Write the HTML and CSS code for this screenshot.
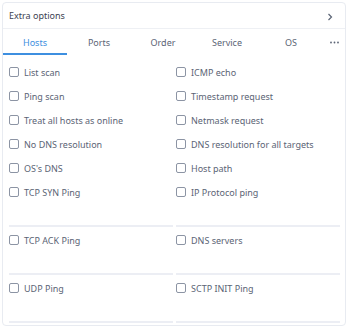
FILE: index.html
```html
<!DOCTYPE html>
<html lang="en">
<head>
    <meta charset="UTF-8">
    <title>Extra options</title>
    <link rel="stylesheet" href="styles.css">
</head>
<body>
    <div class="card">
        <div class="card-header">
            <span class="card-title">Extra options</span>
            <svg class="chevron" width="6" height="8" viewBox="0 0 6 8"><path d="M1.5 1 L4.5 4 L1.5 7" fill="none" stroke="#5b6475" stroke-width="1.2"/></svg>
        </div>
        <div class="tabs">
            <div class="tab active">Hosts</div>
            <div class="tab">Ports</div>
            <div class="tab">Order</div>
            <div class="tab">Service</div>
            <div class="tab">OS</div>
            <div class="tab more">
                <svg width="9" height="3" viewBox="0 0 9 3"><circle cx="1" cy="1.5" r="0.9" fill="#5b6475"/><circle cx="4.5" cy="1.5" r="0.9" fill="#5b6475"/><circle cx="8" cy="1.5" r="0.9" fill="#5b6475"/></svg>
            </div>
        </div>
        <div class="options">
            <label class="option"><span class="box"></span>List scan</label>
            <label class="option"><span class="box"></span>ICMP echo</label>
            <label class="option"><span class="box"></span>Ping scan</label>
            <label class="option"><span class="box"></span>Timestamp request</label>
            <label class="option"><span class="box"></span>Treat all hosts as online</label>
            <label class="option"><span class="box"></span>Netmask request</label>
            <label class="option"><span class="box"></span>No DNS resolution</label>
            <label class="option"><span class="box"></span>DNS resolution for all targets</label>
            <label class="option"><span class="box"></span>OS's DNS</label>
            <label class="option"><span class="box"></span>Host path</label>

            <div class="field-option">
                <label class="option"><span class="box"></span>TCP SYN Ping</label>
                <div class="field"></div>
            </div>
            <div class="field-option">
                <label class="option"><span class="box"></span>IP Protocol ping</label>
                <div class="field"></div>
            </div>
            <div class="field-option">
                <label class="option"><span class="box"></span>TCP ACK Ping</label>
                <div class="field"></div>
            </div>
            <div class="field-option">
                <label class="option"><span class="box"></span>DNS servers</label>
                <div class="field"></div>
            </div>
            <div class="field-option">
                <label class="option"><span class="box"></span>UDP Ping</label>
                <div class="field"></div>
            </div>
            <div class="field-option">
                <label class="option"><span class="box"></span>SCTP INIT Ping</label>
                <div class="field"></div>
            </div>
        </div>
    </div>
</body>
</html>
```

FILE: styles.css
```css
body {
    margin: 0;
    padding: 2px;
    background-color: white;
    font-family: "Noto Sans", sans-serif;
    font-size: 9px;
    color: #5b6475;
}
.card {
    width: 344px;
    height: 324px;
    border: 1px solid #e8ebf1;
    border-radius: 4px;
    box-sizing: border-box;
    overflow: hidden;
}
.card-header {
    height: 25px;
    display: flex;
    align-items: center;
    justify-content: space-between;
    padding: 0 12px 0 6px;
    border-bottom: 1px solid #eef0f4;
}
.card-title {
    color: #3c4252;
}
.chevron {
    margin-top: 2px;
}
.tabs {
    display: flex;
    height: 26px;
}
.tab {
    width: 64px;
    display: flex;
    align-items: center;
    justify-content: center;
    border-bottom: 2px solid transparent;
    box-sizing: border-box;
    padding-top: 2px;
}
.tab.active {
    color: #3d8fe0; /* blue for the selected tab */
    border-bottom-color: #3d8fe0;
}
.tab.more {
    width: 22px;
}
.options {
    display: grid;
    grid-template-columns: 164px 164px;
    column-gap: 3px;
    padding: 5px 6px 0 6px;
}
.option {
    height: 24px;
    display: flex;
    align-items: center;
    gap: 5px;
}
.box {
    width: 8px;
    height: 8px;
    border: 1px solid #8c94a4;
    border-radius: 2px;
}
.field {
    height: 21px;
    border-bottom: 2px solid #eceef4;
    margin-bottom: 1px;
}
```
